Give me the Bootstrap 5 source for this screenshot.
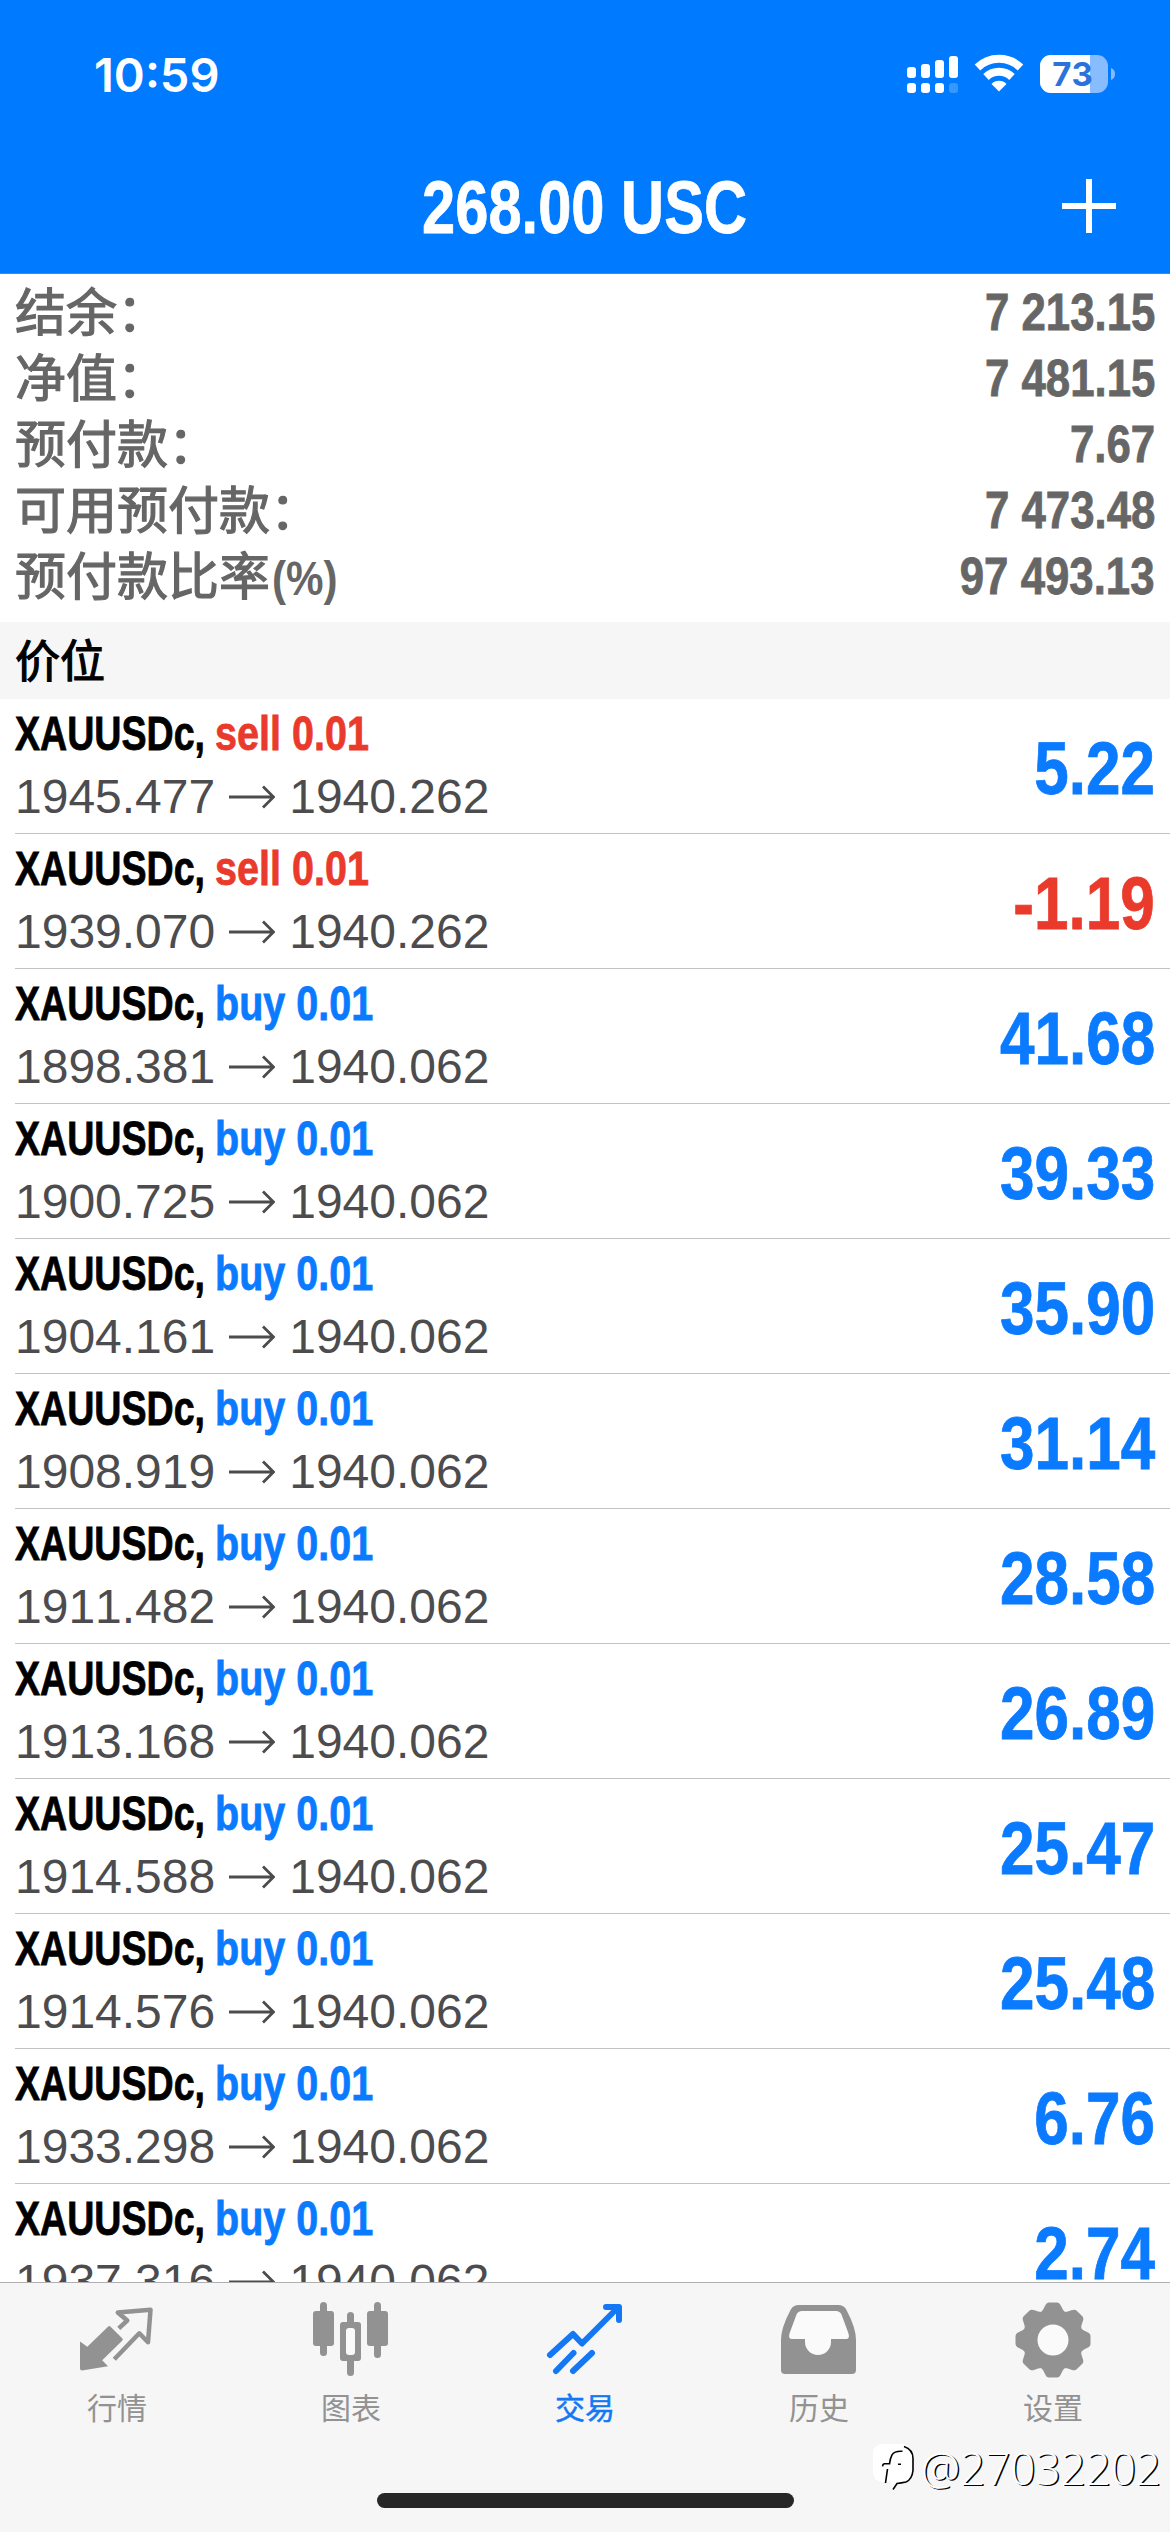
<!DOCTYPE html>
<html lang="zh-CN">
<head>
<meta charset="utf-8">
<meta name="viewport" content="width=device-width, initial-scale=1">
<title>交易</title>
<link href="https://cdn.jsdelivr.net/npm/bootstrap@5.3.0/dist/css/bootstrap.min.css" rel="stylesheet">
<style>
  body { font-family: "Liberation Sans", "Noto Sans CJK SC", sans-serif; font-kerning: none; }
  .phone { width: 1170px; height: 2532px; }
  .topbar { height: 274px; background: #007aff; border-bottom: 1px solid #4688d8; }
  .statusbar { height: 148px; padding: 0 54px 0 94px; }
  .clock { font: 600 47px/1 Inter, sans-serif; }
  .titlebar { height: 116px; }
  .cond { display: inline-block; font-weight: 700; white-space: nowrap; -webkit-text-stroke: .8px currentColor; }
  .title-text { font-size: 74px; line-height: 1; padding-top: 4px; transform: scaleX(.806); }
  .add-btn { right: 54px; top: 31px; line-height: 0; }
  .summary { height: 348px; padding: 5px 15px 0; color: #666; }
  .summary-row { height: 66px; }
  .summary-row .label { font: 400 51px/60px "Noto Sans CJK SC", sans-serif; padding-bottom: 6px; -webkit-text-stroke: 1.2px #666; }
  .pct { display: inline-block; margin-left: 2px; transform: scaleX(.86); transform-origin: left; font: 700 49px/1 "Liberation Sans", sans-serif; -webkit-text-stroke: 0; }
  .summary-row .cond { font-size: 52.5px; padding-top: 1px; transform: scaleX(.834); transform-origin: right; }
  .section-head { height: 77px; background: #f6f6f6; padding-left: 15px; font: 400 45px/73px "Noto Sans CJK SC", sans-serif; color: #000; -webkit-text-stroke: 1.2px #000; }
  .deals { height: 1583px; }
  .deal { height: 135px; margin-left: 15px; padding-right: 15px; border-bottom: 1px solid #c3c3c5; }
  .deal-name { font-size: 49px; line-height: 60px; height: 62px; }
  .sym { width: 200px; transform: scaleX(.767); transform-origin: left; color: #000; }
  .side { transform: scaleX(.807); transform-origin: left; }
  .deal-price { font-size: 48px; line-height: 64px; color: #4c4c4e; }
  .deal-price svg { margin: 0 14px 0 14px; }
  .profit { font-size: 74px; line-height: 1; padding-top: 5px; transform: scaleX(.838); transform-origin: right; }
  .up { color: #0a7aff; }
  .down { color: #e93a2b; }
  .tabbar { height: 250px; background: #f6f6f6; border-top: 1px solid #b0b0b2; }
  .tab { width: 234px; padding-top: 16px; color: #929292; font: 400 30px/36px "Noto Sans CJK SC", sans-serif; }
  .tab svg { display: block; margin-bottom: 5px; }
  .tab.active { color: #1478f5; }
  .tab.active span { -webkit-text-stroke: .5px currentColor; }
  .home-bar { width: 417px; height: 15px; border-radius: 8px; background: #272727; left: 377px; bottom: 24px; }
  .stamp { right: 9px; bottom: 38px; color: #fff; font: 300 44px/52px "Open Sans", sans-serif; }
  .stamp span { text-shadow: 1.5px 1px 0 #000; }
</style>
</head>
<body>
<main class="phone d-flex flex-column overflow-hidden bg-white position-relative">
  <header class="topbar flex-shrink-0 text-white">
    <div class="statusbar d-flex justify-content-between align-items-center">
      <span class="clock">10:59</span>
      <svg width="210" height="40" viewBox="906 54 210 40" fill="#fff">
        <rect x="907" y="67" width="9" height="11" rx="3"/><rect x="921" y="64" width="9" height="14" rx="3"/>
        <rect x="935" y="60" width="9" height="18" rx="3"/><rect x="949" y="56" width="9" height="22" rx="3"/>
        <rect x="907" y="83" width="9" height="10" rx="3"/><rect x="921" y="83" width="9" height="10" rx="3"/>
        <rect x="935" y="83" width="9" height="10" rx="3"/><rect x="949" y="83" width="9" height="10" rx="3" opacity=".22"/>
        <g fill="none" stroke="#fff" stroke-width="8"><path d="M977.500 67.500a31 31 0 0 1 43 0"/><path d="M986 77a19 19 0 0 1 26 0"/></g>
        <path d="M999 91.500l-7.500-7.500a10.500 10.500 0 0 1 15 0z"/>
        <clipPath id="cell"><rect x="1040" y="55" width="68" height="38" rx="11"/></clipPath>
        <g clip-path="url(#cell)"><rect x="1040" y="55" width="68" height="38" fill="#87bcff"/><rect x="1040" y="55" width="50" height="38"/></g>
        <path d="M1111 68a6.500 6.500 0 0 1 0 12z" fill="#87bcff"/>
        <text x="1072.500" y="86" text-anchor="middle" font-family="Inter" font-weight="700" font-size="33" fill="#2b72dd">73</text>
      </svg>
    </div>
    <div class="titlebar position-relative d-flex justify-content-center align-items-center">
      <span class="cond title-text">268.00 USC</span>
      <div class="add-btn position-absolute"><svg width="54" height="54" stroke="#fff" stroke-width="6"><path d="M27 0v54M0 27h54"/></svg></div>
    </div>
  </header>

  <section class="summary flex-shrink-0">
    <div class="summary-row d-flex justify-content-between align-items-center"><span class="label">结余：</span><span class="cond">7 213.15</span></div>
    <div class="summary-row d-flex justify-content-between align-items-center"><span class="label">净值：</span><span class="cond">7 481.15</span></div>
    <div class="summary-row d-flex justify-content-between align-items-center"><span class="label">预付款：</span><span class="cond">7.67</span></div>
    <div class="summary-row d-flex justify-content-between align-items-center"><span class="label">可用预付款：</span><span class="cond">7 473.48</span></div>
    <div class="summary-row d-flex justify-content-between align-items-center"><span class="label">预付款比率<span class="pct">(%)</span></span><span class="cond">97 493.13</span></div>
  </section>
  <div class="section-head flex-shrink-0">价位</div>
  <section class="deals overflow-hidden flex-shrink-0" id="deals"></section>

  <nav class="tabbar d-flex flex-shrink-0">
    <div class="tab d-flex flex-column align-items-center">
      <svg width="78" height="84" viewBox="78 2299 78 84"><path d="M80 2341.500l7.300 5.200 20.700-20q1.300-1.200 2.600 0l11.600 11.500q1.300 1.300 0 2.600l-20 19.500 5.800 6-26 4.200q-2 0-2-2z" fill="currentColor"/><path d="M118.800 2328.300l8.500-7.800-9.500-8 32.700-2.700-2.500 32.500-8.700-9-25 26" fill="none" stroke="currentColor" stroke-width="4.500" stroke-linejoin="round"/></svg>
      <span>行情</span></div>
    <div class="tab d-flex flex-column align-items-center">
      <svg width="78" height="84" viewBox="312 2299 78 84" fill="currentColor"><rect x="320" y="2302" width="7" height="54" rx="3.500"/><rect x="313" y="2311" width="21" height="35" rx="3"/><rect x="374" y="2302" width="7" height="56" rx="3.500"/><rect x="367" y="2311" width="21" height="35" rx="3"/><rect x="347" y="2312" width="7" height="64" rx="3.500"/><rect x="340" y="2322" width="21" height="39" rx="3"/><rect x="346" y="2328" width="9" height="27" rx="3" fill="#fafafa"/></svg>
      <span>图表</span></div>
    <div class="tab active d-flex flex-column align-items-center">
      <svg width="78" height="84" viewBox="546 2299 78 84" fill="none" stroke="currentColor" stroke-width="6" stroke-linecap="round" stroke-linejoin="round"><path d="M550 2355l23-21 9 9.500 36-36M606 2307h13v13M556 2371l17.500-18M573 2371l19-18"/></svg>
      <span>交易</span></div>
    <div class="tab d-flex flex-column align-items-center">
      <svg width="78" height="84" viewBox="780 2299 78 84"><path d="M799 2305h39q6 0 8.500 5 9.500 18 9.500 30v30q0 4-4 4h-67q-4 0-4-4v-30q0-12 9.500-30 2.500-5 8.500-5z" fill="currentColor"/><path d="M802 2311h34q4 0 5.500 3.500l7 19q1.500 5.500-2.500 5.500h-15v3a13 13 0 0 1-26 0v-3h-13q-4 0-2.500-5.500l7-19q1.500-3.500 5.500-3.500z" fill="#fafafa"/></svg>
      <span>历史</span></div>
    <div class="tab d-flex flex-column align-items-center">
      <svg width="78" height="84" viewBox="-39 -41 78 84" fill="currentColor"><circle r="30"/><g id="teeth"></g><circle r="15.500" fill="#fafafa"/></svg>
      <span>设置</span></div>
  </nav>

  <div class="home-bar position-absolute"></div>
  <div class="stamp position-absolute d-flex align-items-center">
    <svg class="me-1" width="44" height="48" viewBox="0 0 44 48"><path d="M11 0h18q11 2 11 14v13q0 10-9 11l-8 2-3 5-2-7h-7q-11 0-11-11v-16q0-11 11-11z" fill="#fff"/><g fill="none" stroke="#000" stroke-width="1.600"><path d="M31 2.500q9 3 9 12v12q-1 9-7 11.500-5 1-9 1.500l-4 6M29.500 7.300q-8-.5-10.500 3.500-2 4-2.500 9h-5q-1.500 0-2 2.500M14.500 25l-2 14M25 20.300h3"/></g></svg>
    <span>@27032202</span>
  </div>
</main>
<script src="https://cdn.jsdelivr.net/npm/bootstrap@5.3.0/dist/js/bootstrap.bundle.min.js"></script>
<script>
  const deals = [
    ['sell', '1945.477', '1940.262', '5.22'],
    ['sell', '1939.070', '1940.262', '-1.19'],
    ['buy', '1898.381', '1940.062', '41.68'],
    ['buy', '1900.725', '1940.062', '39.33'],
    ['buy', '1904.161', '1940.062', '35.90'],
    ['buy', '1908.919', '1940.062', '31.14'],
    ['buy', '1911.482', '1940.062', '28.58'],
    ['buy', '1913.168', '1940.062', '26.89'],
    ['buy', '1914.588', '1940.062', '25.47'],
    ['buy', '1914.576', '1940.062', '25.48'],
    ['buy', '1933.298', '1940.062', '6.76'],
    ['buy', '1937.316', '1940.062', '2.74']
  ];
  document.getElementById('deals').innerHTML = deals.map(([side, open, now, profit]) => `
    <div class="deal d-flex justify-content-between align-items-center">
      <div>
        <div class="deal-name d-flex"><span class="cond sym">XAUUSDc,</span><span class="cond side ${side === 'buy' ? 'up' : 'down'}">${side} 0.01</span></div>
        <div class="deal-price d-flex align-items-center"><span>${open}</span><svg width="46" height="24" fill="none" stroke="currentColor" stroke-width="2.800"><path d="M0 12h44M34 1.500l10.500 10.500-10.500 10.500"/></svg><span>${now}</span></div>
      </div>
      <span class="cond profit ${profit[0] === '-' ? 'down' : 'up'}">${profit}</span>
    </div>`).join('');
  document.getElementById('teeth').innerHTML = [0, 45, 90, 135, 180, 225, 270, 315].map(a =>
    `<path transform="rotate(${a})" d="M-13-27q3-2 5-7 1.500-3.500 4-3.500h8q2.500 0 4 3.500 2 5 5 7z"/>`).join('');
</script>
</body>
</html>
